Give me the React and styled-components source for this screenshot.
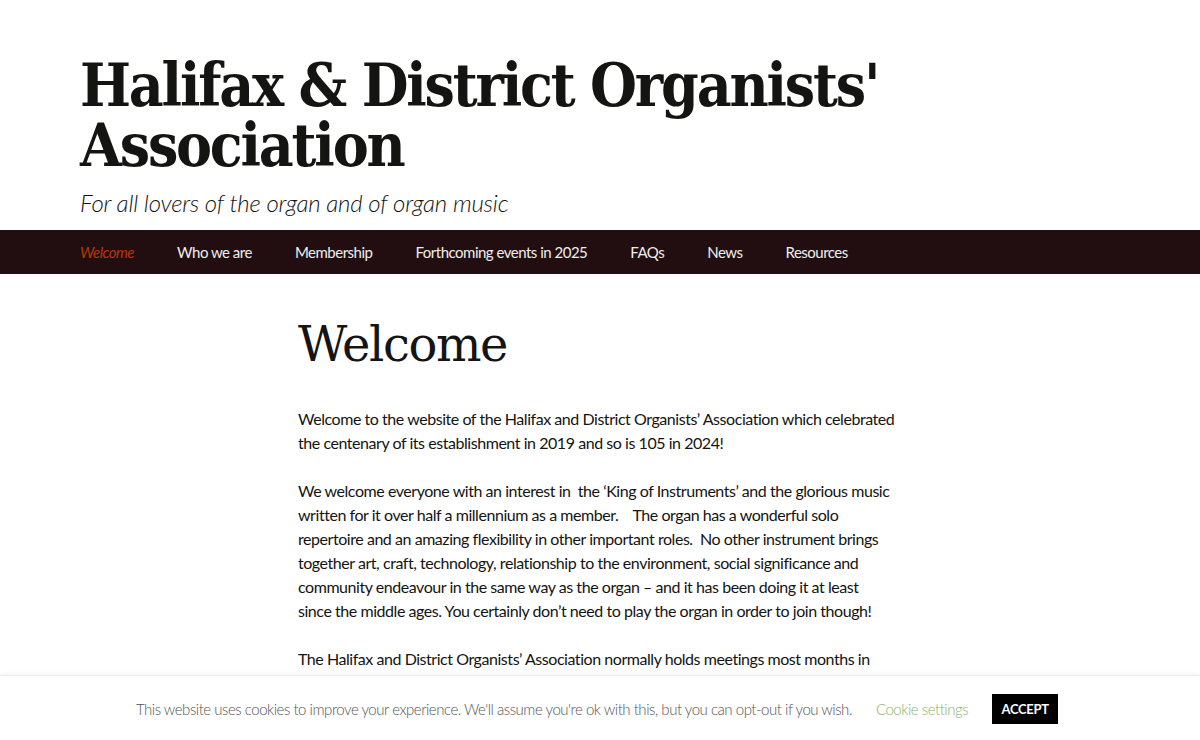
import React from 'react'
import styled, { createGlobalStyle } from 'styled-components'

const Global = createGlobalStyle`
  html, body { margin: 0; padding: 0; background: #fff; }
  body { font-family: Lato, "Noto Sans", sans-serif; color: #141412; }
  * { box-sizing: border-box; }
`

const Page = styled.div`
  width: 100%;
  height: 740px;
  overflow: hidden;
  position: relative;
`

const Header = styled.header`
  padding: 55px 80px 0;
  height: 230px;
`

const SiteTitle = styled.h1`
  margin: 0;
  font-family: "DejaVu Serif Condensed", "DejaVu Serif", serif;
  font-stretch: condensed;
  font-weight: 700;
  font-size: 60px;
  line-height: 60px;
  letter-spacing: -2.2px;
  color: #141412;
`

const Tagline = styled.h2`
  margin: 13px 0 0;
  font-family: Lato, "Noto Sans", sans-serif;
  font-style: italic;
  font-weight: 300;
  font-size: 24px;
  line-height: 30px;
  letter-spacing: -0.2px;
  color: #141412;
`

const NavBar = styled.nav`
  background: #220e10;
  height: 44px;
  display: flex;
  align-items: center;
  padding-left: 80px;
  gap: 43px;
`

const NavItem = styled.a`
  font-family: Lato, "Noto Sans", sans-serif;
  font-size: 15px;
  letter-spacing: -0.5px;
  color: ${p => (p.$active ? '#bc360a' : '#eee')};
  font-style: ${p => (p.$active ? 'italic' : 'normal')};
  text-decoration: none;
`

const Content = styled.main`
  width: 604px;
  margin: 0 auto;
  padding-top: 35px;
`

const PageTitle = styled.h1`
  margin: 0 0 28px;
  font-family: "DejaVu Serif", serif;
  font-weight: 400;
  font-size: 48px;
  line-height: 70px;
  letter-spacing: -1.4px;
  color: #141412;
`

const Para = styled.p`
  margin: 0 0 24px;
  font-size: 16px;
  line-height: 24px;
  letter-spacing: -0.45px;
  white-space: nowrap;
  color: #141412;
`

const CookieBar = styled.div`
  position: absolute;
  left: 0;
  right: 0;
  bottom: 0;
  height: 65px;
  background: #fff;
  border-top: 1px solid #eee;
  box-shadow: 0 -2px 4px rgba(0, 0, 0, 0.04);
  display: flex;
  align-items: center;
  justify-content: center;
  gap: 24px;
  padding: 2px 6px 0 0;
`

const CookieText = styled.span`
  font-size: 15px;
  font-weight: 300;
  letter-spacing: -0.47px;
  color: #555;
`

const CookieLink = styled.a`
  font-size: 15px;
  font-weight: 300;
  letter-spacing: -0.47px;
  color: #85b46a;
`

const AcceptButton = styled.button`
  background: #000;
  color: #fff;
  border: none;
  font-family: Lato, "Noto Sans", sans-serif;
  font-weight: 700;
  font-size: 13px;
  letter-spacing: -0.3px;
  height: 30px;
  width: 66px;
  padding: 0;
`

const menu = ['Welcome', 'Who we are', 'Membership', 'Forthcoming events in 2025', 'FAQs', 'News', 'Resources']

export default function App() {
  return (
    <Page>
      <Global />
      <Header>
        <SiteTitle>Halifax &amp; District Organists'<br />Association</SiteTitle>
        <Tagline>For all lovers of the organ and of organ music</Tagline>
      </Header>
      <NavBar>
        {menu.map((m, i) => (
          <NavItem key={m} $active={i === 0}>{m}</NavItem>
        ))}
      </NavBar>
      <Content>
        <PageTitle>Welcome</PageTitle>
        <Para>
          Welcome to the website of the Halifax and District Organists’ Association which celebrated<br />
          the centenary of its establishment in 2019 and so is 105 in 2024!
        </Para>
        <Para>
          We welcome everyone with an interest in&nbsp; the ‘King of Instruments’ and the glorious music<br />
          written for it over half a millennium as a member.&nbsp;&nbsp;&nbsp; The organ has a wonderful solo<br />
          repertoire and an amazing flexibility in other important roles.&nbsp; No other instrument brings<br />
          together art, craft, technology, relationship to the environment, social significance and<br />
          community endeavour in the same way as the organ – and it has been doing it at least<br />
          since the middle ages. You certainly don’t need to play the organ in order to join though!
        </Para>
        <Para>
          The Halifax and District Organists’ Association normally holds meetings most months in<br />
          the year, ranging from recitals and visits to organs to talks and social events.
        </Para>
      </Content>
      <CookieBar>
        <CookieText>This website uses cookies to improve your experience. We'll assume you're ok with this, but you can opt-out if you wish.</CookieText>
        <CookieLink>Cookie settings</CookieLink>
        <AcceptButton>ACCEPT</AcceptButton>
      </CookieBar>
    </Page>
  )
}
